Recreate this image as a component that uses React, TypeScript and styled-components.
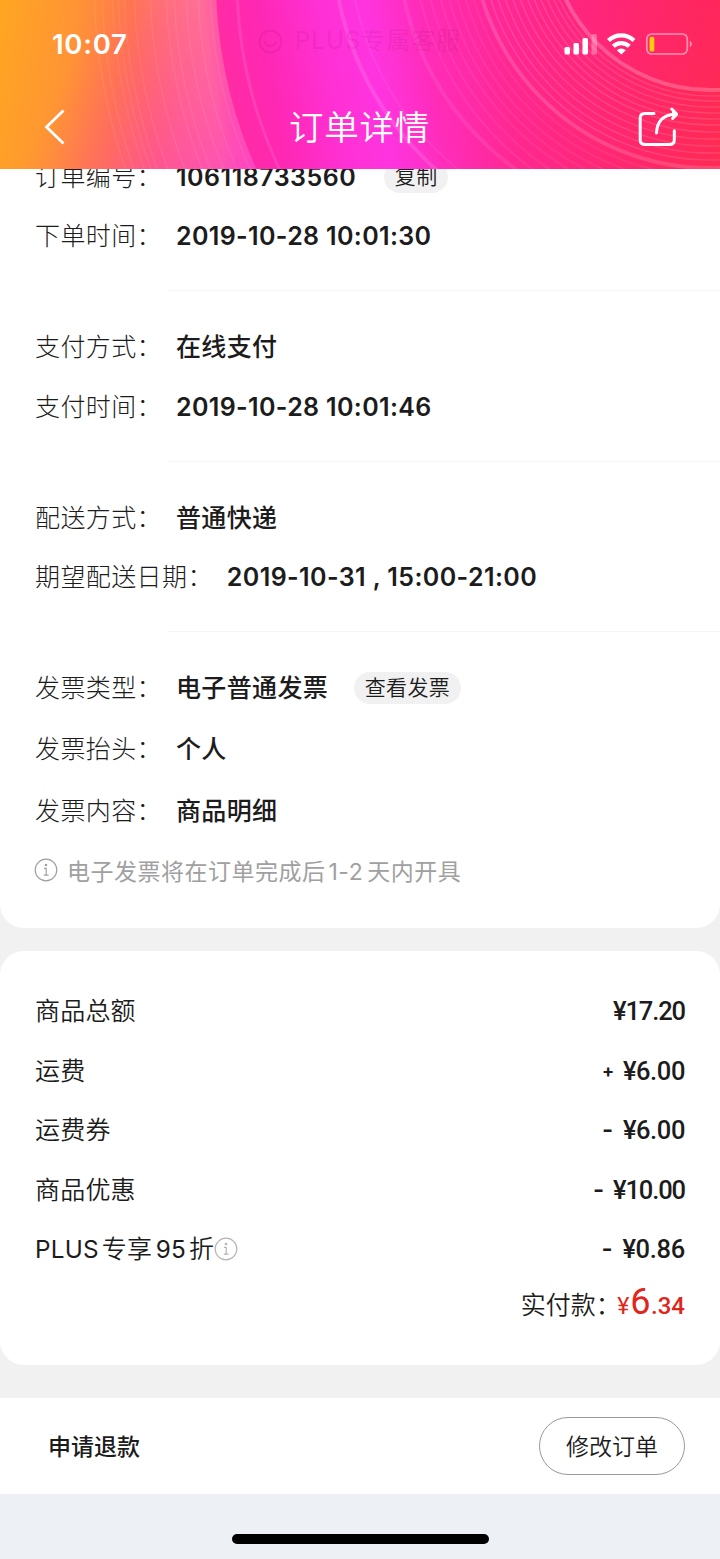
import React from "react";
import styled, { createGlobalStyle } from "styled-components";

const Global = createGlobalStyle`
  * { box-sizing: border-box; }
  body { margin: 0; background: #f1f1f1; }
`;

const Screen = styled.div`
  width: 720px;
  height: 1559px;
  overflow: hidden;
  display: flex;
  flex-direction: column;
  font-family: Inter, "Noto Sans CJK SC", sans-serif;
  color: #1c1c1c;
  background: #f1f1f1;
`;

const Header = styled.header`
  position: relative;
  z-index: 1;
  height: 169px;
  flex: none;
  display: flex;
  flex-direction: column;
  color: #fff;
  overflow: hidden;
`;

const Artwork = styled.svg`
  position: absolute;
  inset: 0;
`;

const Ghost = styled.div`
  position: absolute;
  left: 257px;
  top: 25px;
  display: flex;
  align-items: center;
  gap: 11px;
  font-size: 24px;
  line-height: 32px;
  letter-spacing: 1px;
  color: rgba(170, 20, 120, 0.17);
`;

const StatusBar = styled.div`
  position: relative;
  height: 88px;
  padding: 0 28px 0 52px;
  display: flex;
  justify-content: space-between;
  align-items: center;
`;

const Clock = styled.span`
  font-size: 27.5px;
  font-weight: 600;
  letter-spacing: 0.7px;
`;

const NavBar = styled.div`
  position: relative;
  height: 81px;
  padding: 0 42px 3px 44px;
  display: flex;
  justify-content: space-between;
  align-items: center;
`;

const Title = styled.h1`
  margin: 1px 3px 0 0;
  font-size: 34.5px;
  font-weight: 350;
  line-height: 48px;
  letter-spacing: 0.7px;
`;

const Card = styled.section<{ $first?: boolean }>`
  background: #fff;
  flex: none;
  border-radius: ${(p) => (p.$first ? "0 0 24px 24px" : "24px")};
  height: ${(p) => (p.$first ? "759px" : "414px")};
  margin-bottom: ${(p) => (p.$first ? "23px" : "33px")};
  padding-top: ${(p) => (p.$first ? "0" : "30.4px")};
`;

const Group = styled.div<{ $top: number; $height: number }>`
  display: flex;
  flex-direction: column;
  height: ${(p) => p.$height}px;
  padding: ${(p) => p.$top}px 35px 0;
`;

const Divider = styled.hr`
  margin: 0 0 0 168px;
  border: 0;
  height: 1px;
  background: #f6f6f6;
`;

const Row = styled.div<{ $h?: number; $tucked?: boolean }>`
  display: flex;
  flex: none;
  align-items: center;
  height: ${(p) => p.$h ?? 60}px;
  margin-top: ${(p) => (p.$tucked ? "-22px" : "0")};
`;

const Label = styled.span`
  font-size: 25px;
  font-weight: 300;
  line-height: 36px;
  letter-spacing: 0.4px;
  margin-right: 14px;
  white-space: nowrap;
`;

const Value = styled.span<{ $num?: boolean; $ls?: number }>`
  font-size: 25px;
  font-weight: ${(p) => (p.$num ? 600 : 500)};
  line-height: 36px;
  letter-spacing: ${(p) => p.$ls ?? 0.35}px;
  white-space: nowrap;
`;

const Chip = styled.span<{ $gap: number }>`
  margin-left: ${(p) => p.$gap}px;
  height: 32px;
  padding: 0 10.5px;
  border-radius: 16px;
  background: #f1f1f1;
  font-size: 21px;
  font-weight: 350;
  line-height: 32px;
  letter-spacing: 0.4px;
`;

const Note = styled.div`
  display: flex;
  align-items: center;
  gap: 9px;
  height: 56px;
  margin-left: -1px;
  color: #a0a0a0;
  font-size: 23px;
  letter-spacing: 0.5px;
`;

const Latin = styled.span<{ $before?: number; $after?: number }>`
  margin-left: ${(p) => p.$before ?? 0}px;
  margin-right: ${(p) => p.$after ?? 0}px;
`;

const FeeRow = styled.div`
  display: flex;
  align-items: center;
  justify-content: space-between;
  height: 59.5px;
  padding: 0 35px;
`;

const FeeLabel = styled.span`
  display: flex;
  align-items: center;
  font-size: 25px;
  font-weight: 350;
  letter-spacing: 0.2px;
  line-height: 36px;

  ${Latin} {
    font-size: 24.3px;
    font-weight: 400;
  }
`;

const Amount = styled.span<{ $ls: number }>`
  display: flex;
  align-items: center;
  font-family: Roboto, sans-serif;
  font-weight: 500;
  font-size: 25.5px;
  letter-spacing: ${(p) => p.$ls}px;
`;

const Sign = styled.span<{ $plus: boolean }>`
  font-family: Inter, sans-serif;
  font-weight: ${(p) => (p.$plus ? 700 : 600)};
  font-size: ${(p) => (p.$plus ? 18 : 24)}px;
  line-height: 24px;
  margin-right: ${(p) => (p.$plus ? 9 : 10)}px;
`;

const TotalRow = styled.div`
  display: flex;
  align-items: baseline;
  justify-content: flex-end;
  padding: 0 35px;
  height: 50px;
  line-height: 46px;
  font-size: 25px;
  font-weight: 350;
`;

const Colon = styled.span`
  font-family: "Noto Sans CJK SC", sans-serif;
  font-feature-settings: "halt";
  margin-right: 9px;
`;

const Pay = styled.span<{ $size: number; $weight?: number; $gap?: number }>`
  font-family: Roboto, sans-serif;
  color: #e1251b;
  font-size: ${(p) => p.$size}px;
  font-weight: ${(p) => p.$weight ?? 400};
  margin-left: ${(p) => p.$gap ?? 0}px;
`;

const Actions = styled.footer`
  flex: none;
  height: 96px;
  background: #fff;
  padding: 0 35px 0 48px;
  display: flex;
  align-items: center;
  justify-content: space-between;
`;

const Refund = styled.button`
  border: 0;
  padding: 1px 0 0;
  background: none;
  font: 500 23px/34px Inter, "Noto Sans CJK SC", sans-serif;
  color: #1c1c1c;
`;

const Modify = styled.button`
  width: 146px;
  height: 58px;
  border: 1px solid #999;
  border-radius: 29px;
  padding: 1px 0 0;
  background: #fff;
  font: 350 23px/34px Inter, "Noto Sans CJK SC", sans-serif;
  color: #1c1c1c;
`;

const HomeArea = styled.div`
  flex: 1;
  background: #edf1f6;
  display: flex;
  justify-content: center;
  align-items: flex-end;
  padding-bottom: 15px;
`;

const HomeBar = styled.div`
  width: 257px;
  height: 10px;
  border-radius: 5px;
  background: #000;
`;

const InfoIcon = ({ color }: { color: string }) => (
  <svg width="24" height="24" viewBox="0 0 24 24" fill="none" stroke={color} strokeWidth="1.2">
    <circle cx="12" cy="12" r="10.8" />
    <path d="M10 10.3h2.2v6.6M9.8 17.1h4.8" />
    <circle cx="12" cy="7" r="0.7" fill={color} />
  </svg>
);

const innerRings = [166, 171, 177, 183, 189, 195, 202, 209, 216, 223, 230];
const outerRings = [246, 254, 262, 270, 278, 288, 298];
const streaks = [470, 482, 494, 506, 514, 530, 546, 556, 562, 568, 578, 586];

const HeaderArt = () => (
  <Artwork width="720" height="169" viewBox="0 0 720 169">
    <defs>
      <linearGradient id="base" gradientUnits="userSpaceOnUse" x1="0" y1="20" x2="250" y2="60">
        <stop offset="0" stopColor="#ffa522" />
        <stop offset="0.28" stopColor="#ff9534" />
        <stop offset="0.5" stopColor="#ff784c" />
        <stop offset="0.72" stopColor="#ff6278" />
        <stop offset="1" stopColor="#ff4ca8" />
      </linearGradient>
      <linearGradient id="shade" gradientUnits="userSpaceOnUse" x1="60" y1="90" x2="240" y2="190">
        <stop offset="0" stopColor="#ff5080" stopOpacity="0" />
        <stop offset="1" stopColor="#ff40c4" stopOpacity="0.8" />
      </linearGradient>
      <linearGradient id="band" gradientUnits="userSpaceOnUse" x1="130" y1="0" x2="212" y2="-12">
        <stop offset="0" stopColor="#ff9080" stopOpacity="0" />
        <stop offset="0.85" stopColor="#ff8a9c" stopOpacity="0.75" />
        <stop offset="1" stopColor="#ff70b4" stopOpacity="0.6" />
      </linearGradient>
      <linearGradient id="core" gradientUnits="userSpaceOnUse" x1="215" y1="60" x2="710" y2="-30">
        <stop offset="0" stopColor="#ff2ca0" />
        <stop offset="0.1" stopColor="#ff28b4" />
        <stop offset="0.22" stopColor="#ff30d4" />
        <stop offset="0.31" stopColor="#ff34e0" />
        <stop offset="0.42" stopColor="#ff2cb8" />
        <stop offset="0.56" stopColor="#ff2898" />
        <stop offset="0.78" stopColor="#ff2480" />
        <stop offset="1" stopColor="#ff2462" />
      </linearGradient>
      <radialGradient id="warm" gradientUnits="userSpaceOnUse" cx="760" cy="150" r="300">
        <stop offset="0" stopColor="#ff3040" stopOpacity="0.65" />
        <stop offset="1" stopColor="#ff2860" stopOpacity="0" />
      </radialGradient>
    </defs>
    <rect width="720" height="169" fill="url(#base)" />
    <circle cx="680" cy="-20" r="548" fill="url(#band)" />
    <rect width="300" height="169" fill="url(#shade)" />
    <circle cx="680" cy="-20" r="464" fill="url(#core)" />
    <rect x="400" width="320" height="169" fill="url(#warm)" />
    <g fill="none" stroke="#fff">
      {streaks.map((r) => (
        <circle key={r} cx="680" cy="-20" r={r} strokeOpacity="0.07" strokeWidth="1.5" />
      ))}
      <circle cx="680" cy="-20" r="443" strokeOpacity="0.1" strokeWidth="3" />
      <circle cx="640" cy="-60" r="307" strokeOpacity="0.12" strokeWidth="4" />
      <circle cx="645" cy="-60" r="296" strokeOpacity="0.06" strokeWidth="2" />
      <circle cx="680" cy="-60" r="282" strokeOpacity="0.08" strokeWidth="4" />
      {outerRings.map((r) => (
        <circle key={r} cx="710" cy="-70" r={r} strokeOpacity="0.06" strokeWidth="2" />
      ))}
      {innerRings.map((r) => (
        <circle key={r} cx="710" cy="-70" r={r} strokeOpacity="0.13" strokeWidth="1.5" />
      ))}
      <circle cx="710" cy="-70" r="160" strokeOpacity="0.22" strokeWidth="4" />
      <circle cx="710" cy="-70" r="238" strokeOpacity="0.15" strokeWidth="4" />
    </g>
  </Artwork>
);

const fees = [
  { name: "商品总额", sign: "", value: "¥17.20", ls: -1.1 },
  { name: "运费", sign: "+", value: "¥6.00", ls: -0.4 },
  { name: "运费券", sign: "-", value: "¥6.00", ls: -0.4 },
  { name: "商品优惠", sign: "-", value: "¥10.00", ls: -1.1 },
  { name: "PLUS", sign: "-", value: "¥0.86", ls: -0.3 },
];

export default function App() {
  return (
    <Screen lang="zh-CN">
      <Global />
      <Header>
        <HeaderArt />
        <Ghost>
          <svg width="27" height="27" viewBox="0 0 27 27" fill="none" stroke="currentColor" strokeWidth="2">
            <circle cx="13.500" cy="13.500" r="11" />
            <path d="M8 13a5.500 5 0 0 0 11 0" />
          </svg>
          PLUS专属客服
        </Ghost>
        <StatusBar>
          <Clock>10:07</Clock>
          <svg width="128" height="24" viewBox="564 32 128 24" fill="#fff">
            <rect x="564.500" y="47" width="5.500" height="7.500" rx="1.500" />
            <rect x="573.500" y="43" width="5.500" height="11.500" rx="1.500" />
            <rect x="582.500" y="38" width="5.500" height="16.500" rx="1.500" />
            <rect x="591.500" y="34" width="5.500" height="20.500" rx="1.500" opacity="0.3" />
            <g fill="none" stroke="#fff" strokeWidth="4.300">
              <path d="M608.500 40.500a18.500 18.500 0 0 1 25.500 0" />
              <path d="M613.300 46.300a11.500 11.500 0 0 1 16 0" />
            </g>
            <path d="M616.800 50.300a6.800 6.800 0 0 1 9 0l-4.500 4.200z" />
            <rect x="646.800" y="34" width="40.500" height="20" rx="5" fill="none" stroke="#fff" strokeOpacity="0.5" strokeWidth="1.700" />
            <rect x="649.500" y="36.700" width="4.800" height="14.800" rx="1.500" fill="#ffcc0a" />
            <path d="M689.800 40.800c2.600 1 2.600 5.400 0 6.400z" fillOpacity="0.5" />
          </svg>
        </StatusBar>
        <NavBar>
          <svg width="40" height="36" viewBox="0 0 40 36" fill="none" stroke="#fff" strokeWidth="2.800">
            <path d="M19.500 1.500L2.500 18l17 16.500" />
          </svg>
          <Title>订单详情</Title>
          <svg width="40" height="40" viewBox="638 107 40 40" fill="none" stroke="#fff" strokeWidth="3" strokeLinecap="round" strokeLinejoin="round">
            <path d="M654 113.500h-9q-4.800 0-4.800 4.800v21.500q0 4.800 4.800 4.800h24.500q4.800 0 4.800-4.800v-9" />
            <path d="M656.500 133c.5-11 6-18 18-18.800" />
            <path d="M671.800 109l5 5.200-4.200 4.300" fill="#fff" />
          </svg>
        </NavBar>
      </Header>

      <Card $first>
        <Group $top={0} $height={121}>
          <Row $tucked>
            <Label>订单编号：</Label>
            <Value $num $ls={0.5}>106118733560</Value>
            <Chip $gap={28}>复制</Chip>
          </Row>
          <Row $h={58}>
            <Label>下单时间：</Label>
            <Value $num>2019-10-28 10:01:30</Value>
          </Row>
        </Group>
        <Divider />
        <Group $top={26} $height={170}>
          <Row>
            <Label>支付方式：</Label>
            <Value>在线支付</Value>
          </Row>
          <Row>
            <Label>支付时间：</Label>
            <Value $num>2019-10-28 10:01:46</Value>
          </Row>
        </Group>
        <Divider />
        <Group $top={26} $height={169}>
          <Row>
            <Label>配送方式：</Label>
            <Value>普通快递</Value>
          </Row>
          <Row $h={58}>
            <Label>期望配送日期：</Label>
            <Value $num $ls={0.4}>2019-10-31 , 15:00-21:00</Value>
          </Row>
        </Group>
        <Divider />
        <Group $top={26} $height={296}>
          <Row>
            <Label>发票类型：</Label>
            <Value>电子普通发票</Value>
            <Chip $gap={26}>查看发票</Chip>
          </Row>
          <Row $h={62}>
            <Label>发票抬头：</Label>
            <Value>个人</Value>
          </Row>
          <Row $h={62}>
            <Label>发票内容：</Label>
            <Value>商品明细</Value>
          </Row>
          <Note>
            <InfoIcon color="#a0a0a0" />
            <span>
              电子发票将在订单完成后
              <Latin $before={3} $after={4}>1-2</Latin>
              天内开具
            </span>
          </Note>
        </Group>
      </Card>

      <Card>
        {fees.map(({ name, sign, value, ls }) => (
          <FeeRow key={name}>
            {name === "PLUS" ? (
              <FeeLabel>
                <Latin $after={3}>PLUS</Latin>
                专享
                <Latin $before={3.5} $after={3}>95</Latin>
                折
                <InfoIcon color="#b5b5b5" />
              </FeeLabel>
            ) : (
              <FeeLabel>{name}</FeeLabel>
            )}
            <Amount $ls={ls}>
              {sign && <Sign $plus={sign === "+"}>{sign}</Sign>}
              {value}
            </Amount>
          </FeeRow>
        ))}
        <TotalRow>
          实付款<Colon>：</Colon>
          <Pay $size={23}>¥</Pay>
          <Pay $size={36} $gap={1}>6</Pay>
          <Pay $size={24} $weight={500} $gap={0.5}>.34</Pay>
        </TotalRow>
      </Card>

      <Actions>
        <Refund>申请退款</Refund>
        <Modify>修改订单</Modify>
      </Actions>
      <HomeArea>
        <HomeBar />
      </HomeArea>
    </Screen>
  );
}
